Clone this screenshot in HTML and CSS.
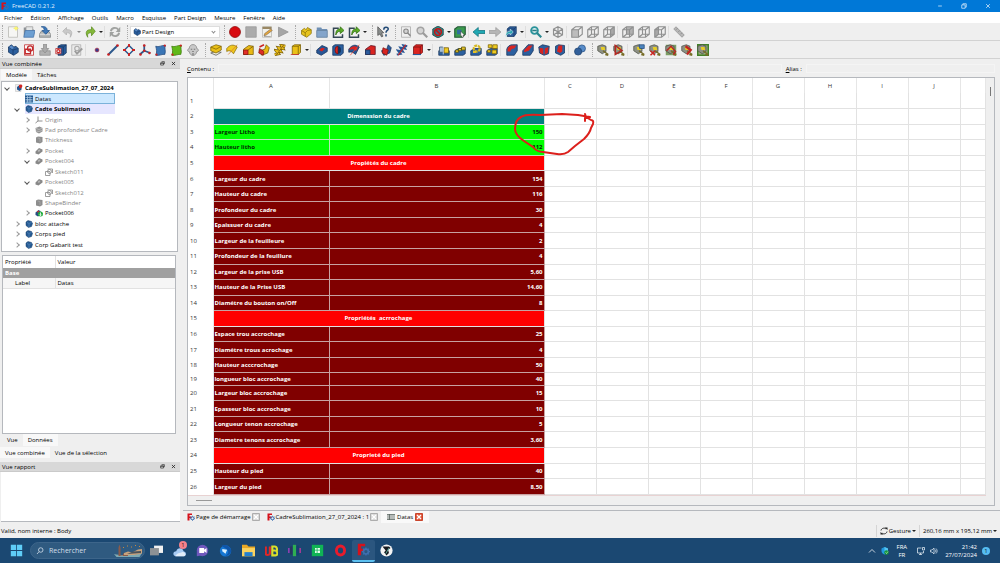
FILE: index.html
```html
<!DOCTYPE html>
<html lang="fr">
<head>
  <meta charset="UTF-8">
  <meta name="viewport" content="width=device-width, initial-scale=1.0">
  <title>FreeCAD 0.21.2</title>
  <link rel="stylesheet" href="styles.css">
</head>
<body>
  <svg class="sprite" aria-hidden="true">
    <!-- application -->
    <symbol id="freecad" viewBox="0 0 16 16"><path d="M1 1h9v3H5v3h4v3H5v5H1z" fill="#d5121c"/><circle cx="11" cy="10.500" r="3" fill="none" stroke="#3d6fb0" stroke-width="2"/><path d="M11 5.500v2M11 13.500v2M6 10.500h2M14 10.500h2M7.500 7l1.500 1.500M14.500 7l-1.500 1.500M7.500 14l1.500-1.500M14.500 14l-1.500-1.500" stroke="#3d6fb0" stroke-width="1.600"/></symbol>
    <symbol id="float" viewBox="0 0 16 16"><path d="M5 2h9v7h-3M2 6h9v7H2zM2 7h9" fill="none" stroke="#222" stroke-width="2"/></symbol>
    <symbol id="close" viewBox="0 0 16 16"><path d="M3 3l10 10M13 3L3 13" stroke="#222" stroke-width="2.600"/></symbol>
    <symbol id="close-tab" viewBox="0 0 16 16"><path d="M1 1h14v14H1z" fill="#d8d8d8" stroke="#adadad" stroke-width="2"/><path d="M4 4l8 8M12 4l-8 8" stroke="#fff" stroke-width="2.600"/></symbol>
    <symbol id="close-on" viewBox="0 0 16 16"><path d="M1 1h14v14H1z" fill="#e0563a" stroke="#c9442b" stroke-width="2"/><path d="M4 4l8 8M12 4l-8 8" stroke="#fff" stroke-width="2.600"/></symbol>
    <!-- file and macro -->
    <symbol id="new" viewBox="0 0 16 16"><path d="M2 1h12v14H2z" fill="#f6f6f4" stroke="#b5b5b0"/><path d="M12 0l1 2 3 1-3 1-1 3-1-3-3-1 3-1z" fill="#f5ee40"/><circle cx="12" cy="3" r="2" fill="#faf47a"/></symbol>
    <symbol id="open" viewBox="0 0 16 16"><path d="M1 2h6l1 2h6v9H1z" fill="#8d9296"/><path d="M4 1h9v6H4z" fill="#e4e6e6" stroke="#999"/><path d="M3 6h13l-2 9H1z" fill="#6d9fd2" stroke="#4673a8"/></symbol>
    <symbol id="save" viewBox="0 0 16 16"><path d="M3 7h10l2.500 4v4H.500v-4z" fill="#b4b7b7" stroke="#7c8080"/><path d="M1 11h14" stroke="#eee"/><path d="M3 1c5-1 8 1 8 5h3l-5 5-5-5h3c0-3-1-4-4-5z" fill="#3e78b8" stroke="#25558d"/></symbol>
    <symbol id="undo" viewBox="0 0 16 16"><path d="M6 2v3c7-1 9 4 5 10 1-5-1-6-5-6v3L1 7z" fill="#c9c9c9" stroke="#b2b2b2"/></symbol>
    <symbol id="redo" viewBox="0 0 16 16"><path d="M10 1v4C3 4 1 9 5 15 4 10 6 9 10 9v4l5-6z" fill="#84b83a" stroke="#5e8d21"/></symbol>
    <symbol id="refresh" viewBox="0 0 16 16"><path d="M2.500 7c1-5 7-6 10-2M13.500 9c-1 5-7 6-10 2" fill="none" stroke="#a0a2a0" stroke-width="2.600"/><path d="M15 1v7H9zM1 15V8h6z" fill="#a0a2a0"/></symbol>
    <symbol id="record" viewBox="0 0 16 16"><circle cx="8" cy="8" r="7.300" fill="#d80b10" stroke="#8e0505"/></symbol>
    <symbol id="stop" viewBox="0 0 16 16"><path d="M1 1h14v14H1z" fill="#ababab" stroke="#9a9a9a"/></symbol>
    <symbol id="macro" viewBox="0 0 16 16"><path d="M2 1h12v14H2z" fill="#f1f0ea" stroke="#b7b7b2"/><path d="M2 1h12v3H2z" fill="#9a8864"/><path d="M4 13l1-3 8-6 2 2-8 6z" fill="#e8a536" stroke="#8d7a5c"/><path d="M4 14h9" stroke="#999"/></symbol>
    <symbol id="play" viewBox="0 0 16 16"><path d="M2 1.500L15 8 2 14.500z" fill="#a6a6a6" stroke="#929292"/></symbol>
    <symbol id="part" viewBox="0 0 16 16"><path d="M2 6l4-3 2 2 2-3 5 3v5l-6 5-7-4z" fill="#e6c31c" stroke="#8a7208"/><path d="M2 6l5 3 3-3M7 9v5M10 6l5-1" fill="none" stroke="#8a7208"/></symbol>
    <symbol id="folder" viewBox="0 0 16 16"><path d="M1 2h6l1 2h7v11H1z" fill="#6f8fb3"/><path d="M1 6h14v9H1z" fill="#84a5cb" stroke="#66819f"/></symbol>
    <symbol id="link" viewBox="0 0 16 16"><path d="M9 3H2v12h12v-4" fill="none" stroke="#344654" stroke-width="2"/><path d="M5 12c0-6 2-8 6-8V1l5 5-5 4V7c-3 0-4 1-6 5z" fill="#59ab25" stroke="#2f6c0e"/></symbol>
    <symbol id="whats" viewBox="0 0 16 16"><path d="M1 1l8 8-3 .500 2 4-2 1-2-4-3 2z" fill="#888c8b" stroke="#555"/><path d="M9 5c0-5 6-4 6-1 0 2-3 2-3 5M12 11v3" fill="none" stroke="#244b76" stroke-width="2"/></symbol>
    <!-- view -->
    <symbol id="fit" viewBox="0 0 16 16"><path d="M2 1h12v14H2z" fill="#eee" stroke="#a6a6a6"/><circle cx="8" cy="7" r="3" fill="#d2d2d2" stroke="#888" stroke-width="1.500"/><path d="M10 9l4 4" stroke="#888" stroke-width="2"/></symbol>
    <symbol id="lens" viewBox="0 0 16 16"><circle cx="6" cy="6" r="4.500" fill="#d4d4d4" stroke="#a3a3a3" stroke-width="2"/><path d="M9 9l6 6" stroke="#9b9b9b" stroke-width="3"/></symbol>
    <symbol id="style" viewBox="0 0 16 16"><path d="M8 0l7 4v8l-7 4-7-4V4z" fill="#2d8b80" stroke="#193944"/><circle cx="8" cy="8" r="4.500" fill="#3f7089" stroke="#c31515" stroke-width="2"/><path d="M5 5l6 6" stroke="#c31515" stroke-width="2"/></symbol>
    <symbol id="bbox" viewBox="0 0 16 16"><path d="M1 4l4-3h10v10l-4 4H1z" fill="#3b9b4c" stroke="#245b38" stroke-width="1.500"/><path d="M4 5h6v6H4z" fill="#2f6d9d"/><path d="M9 7l5 5-2 .500 1 2-2 .500-1-2-1 1z" fill="#fff" stroke="#333" stroke-width=".7"/></symbol>
    <symbol id="left" viewBox="0 0 16 16"><path d="M0 8l7-6v4h9v4H7v4z" fill="#20a8b3" stroke="#13707b"/></symbol>
    <symbol id="right" viewBox="0 0 16 16"><path d="M16 8L9 2v4H0v4h9v4z" fill="#b6b6b6" stroke="#9d9d9d"/></symbol>
    <symbol id="golink" viewBox="0 0 16 16"><path d="M3 4l3-3h9v9l-3 4H3z" fill="#2d5e9b" stroke="#173965"/><path d="M3 4h9v10M12 4l3-3" fill="none" stroke="#173965"/><path d="M1 14c0-5 2-7 6-7V4l4 4-4 4v-2c-3 0-4 1-6 4z" fill="#2aa5b3" stroke="#e5f2f3" stroke-width=".7"/></symbol>
    <symbol id="zoom" viewBox="0 0 16 16"><circle cx="6" cy="6" r="4.500" fill="#e0f0f0" stroke="#2a929a" stroke-width="2.500"/><path d="M9 9l6 6" stroke="#2a8790" stroke-width="3"/><path d="M3 6h6" stroke="#267a84" stroke-width="2"/></symbol>
    <symbol id="iso" viewBox="0 0 16 16"><path d="M8 1l6 3v8l-6 3-6-3V4zM2 4l6 4 6-4M8 1v14M2 12l6-4 6 4" fill="none" stroke="#8f9090" stroke-width="1.500"/></symbol>
    <symbol id="cube" viewBox="0 0 16 16"><path d="M1 5l5-4h9v10l-5 4H1zM1 5h9v10M10 5l5-4M6 1v10h9M6 11l-5 4" fill="none" stroke="#8f9090" stroke-width="1.500"/></symbol>
    <symbol id="cube-f" viewBox="0 0 16 16"><path d="M1 5h9v10H1z" fill="#bcbcbc"/><path d="M1 5l5-4h9v10l-5 4H1zM1 5h9v10M10 5l5-4" fill="none" stroke="#8f9090" stroke-width="1.500"/></symbol>
    <symbol id="cube-r" viewBox="0 0 16 16"><path d="M10 5l5-4v10l-5 4z" fill="#a7a7a7"/><use href="#cube"/></symbol>
    <symbol id="cube-b" viewBox="0 0 16 16"><path d="M6 1h9v10H6z" fill="#b2b2b2"/><use href="#cube"/></symbol>
    <symbol id="cube-l" viewBox="0 0 16 16"><path d="M1 5l5-4v10l-5 4z" fill="#a7a7a7"/><use href="#cube"/></symbol>
    <symbol id="ruler" viewBox="0 0 16 16"><path d="M4 1l11 11-3 3L1 4z" fill="#b7b7b7" stroke="#929292"/><path d="M6 3L4 5M9 6L7 8M12 9l-2 2" stroke="#858585"/></symbol>
    <!-- part design helpers -->
    <symbol id="body" viewBox="0 0 16 16"><path d="M2 4l4-3 3 3 3-1 3 3v5l-6 4-7-4z" fill="#2c5f9e" stroke="#16365f"/><path d="M2 4l6 4 7-2M8 8v7" fill="none" stroke="#173a68"/><path d="M2.500 4L6 2l3 3-2 2z" fill="#5b8bc6"/></symbol>
    <symbol id="sketch" viewBox="0 0 16 16"><path d="M2 1h12v14H2z" fill="#fafafa" stroke="#c1282a"/><circle cx="9.500" cy="6" r="3.500" fill="none" stroke="#c1282a" stroke-width="1.700"/><path d="M3 7h7v6H3z" fill="none" stroke="#c1282a" stroke-width="1.700"/></symbol>
    <symbol id="import" viewBox="0 0 16 16"><path d="M1 9h14v6H1z" fill="#b1b1b1" stroke="#8d8d8d"/><path d="M6 0h4v6h3l-5 6-5-6h3z" fill="#aaa" stroke="#8c8c8c"/></symbol>
    <symbol id="map" viewBox="0 0 16 16"><path d="M4 3l4-2h7v11l-4 3H4z" fill="#285b9b" stroke="#15345c"/><path d="M11 4v11M4 3l7 1 4-3" fill="none" stroke="#15345c"/><path d="M1 6h7v7H1z" fill="#eee" stroke="#b22"/><circle cx="4.500" cy="9.500" r="2" fill="none" stroke="#c22" stroke-width="1.500"/></symbol>
    <symbol id="validate" viewBox="0 0 16 16"><path d="M1 1h12v14H1z" fill="#eaeaea" stroke="#aaa"/><circle cx="8" cy="6" r="3" fill="none" stroke="#aaa" stroke-width="1.500"/><path d="M5 9l3 4 7-7" fill="none" stroke="#9b9b9b" stroke-width="2.400"/></symbol>
    <symbol id="point" viewBox="0 0 16 16"><circle cx="8" cy="8" r="2.500" fill="#353b8c" stroke="#a32645"/></symbol>
    <symbol id="line" viewBox="0 0 16 16"><path d="M2 14L14 2" stroke="#2c588c" stroke-width="2.500"/><circle cx="2" cy="14" r="1.800" fill="#c22"/><circle cx="14" cy="2" r="1.800" fill="#c22"/></symbol>
    <symbol id="plane" viewBox="0 0 16 16"><path d="M8 2l6 6-6 6-6-6z" fill="#f4f4f4" stroke="#2c588c" stroke-width="2"/><path d="M8 0v4M8 12v4M0 8h4M12 8h4" stroke="#c22" stroke-width="2.500"/></symbol>
    <symbol id="axes" viewBox="0 0 16 16"><path d="M7 1v8l8 3M7 9l-6 5" fill="none" stroke="#2c588c" stroke-width="2.300"/><circle cx="7" cy="2" r="1.700" fill="#c22"/><circle cx="7" cy="9" r="1.700" fill="#c22"/><circle cx="2" cy="14" r="1.700" fill="#c22"/><circle cx="14" cy="12" r="1.700" fill="#c22"/></symbol>
    <symbol id="binder" viewBox="0 0 16 16"><path d="M1 3c4 2 8-2 13-1-2 4 1 7-1 12-3-1-7 2-12 1 2-4 1-8 0-12z" fill="#3b76b6" stroke="#214a7d"/><circle cx="13" cy="2" r="1.500" fill="#c22"/><circle cx="2" cy="14" r="1.500" fill="#c22"/></symbol>
    <symbol id="binder-g" viewBox="0 0 16 16"><path d="M1 3c4 2 8-2 13-1-2 4 1 7-1 12-3-1-7 2-12 1 2-4 1-8 0-12z" fill="#61b91a" stroke="#397906"/><circle cx="13" cy="2" r="1.500" fill="#c22"/><circle cx="2" cy="14" r="1.500" fill="#c22"/></symbol>
    <symbol id="clone" viewBox="0 0 16 16"><path d="M3 6c0-7 10-7 10 0 3 1 3 4 0 4-1 7-9 7-10 0-3 0-3-3 0-4z" fill="#c8c8c8" stroke="#858585"/><path d="M5 7h2M9 7h2M7 10h2M8 12v3" stroke="#777" stroke-width="1.500"/></symbol>
    <!-- additive -->
    <symbol id="pad" viewBox="0 0 16 16"><path d="M1 12l6-2 8 1-7 4z" fill="#f0f0e0" stroke="#555"/><path d="M1 4l7-3 7 2v5l-7 4-7-3z" fill="#e9bf16" stroke="#7d6304"/><path d="M1 4l7 3 7-4" fill="none" stroke="#7d6304"/></symbol>
    <symbol id="rev" viewBox="0 0 16 16"><path d="M1 6c4-5 9-6 14-2l-5 9C7 9 4 8 1 10z" fill="#efc71e" stroke="#8a6e05"/><path d="M3 14L15 1" stroke="#da7e28"/></symbol>
    <symbol id="loft" viewBox="0 0 16 16"><path d="M2 7l7-5 6 1v11H2z" fill="#e9b915" stroke="#755b04"/><path d="M2 8h6v6H2z" fill="#e3302a" stroke="#851411"/><path d="M8 8l7-5" stroke="#755b04"/></symbol>
    <symbol id="sweep" viewBox="0 0 16 16"><path d="M2 9l7-2 2-6 4 4-2 7-8 3z" fill="#e9b915" stroke="#755b04"/><path d="M2 6l6 4-1 5-6-3z" fill="#dd2d26" stroke="#861512"/><path d="M2 4l6-3" stroke="#c22" stroke-width="2"/></symbol>
    <symbol id="helix" viewBox="0 0 16 16"><path d="M1 14l5-1-3-4 6 1-3-5 6 1-2-4 5 1" fill="none" stroke="#826507" stroke-width="4"/><path d="M1 14l5-1-3-4 6 1-3-5 6 1-2-4 5 1" fill="none" stroke="#eac01b" stroke-width="2"/><path d="M3 15L13 1" stroke="#754d12"/></symbol>
    <symbol id="prim" viewBox="0 0 16 16"><path d="M3 3l3-2h8v10l-3 3H3z" fill="#eac017" stroke="#755c04"/><path d="M3 3h8v11M11 3l3-2" fill="none" stroke="#755c04"/><path d="M1 14h11" stroke="#c33"/></symbol>
    <!-- subtractive -->
    <symbol id="pocket" viewBox="0 0 16 16"><path d="M1 8l7-6 7 3v5l-8 5-6-3z" fill="#275796" stroke="#15335c"/><path d="M4 8l4-3 4 1-4 4z" fill="#d92320"/></symbol>
    <symbol id="hole" viewBox="0 0 16 16"><path d="M1 3l3-2h11v11l-3 3H1z" fill="#2b609f" stroke="#15335c"/><path d="M8 3a4 5 0 0 0 0 10z" fill="#d92320" stroke="#75100e"/><path d="M8 3a4 5 0 0 1 0 10z" fill="#15335c"/></symbol>
    <symbol id="groove" viewBox="0 0 16 16"><path d="M1 7c4-6 9-7 14-3l-5 10c-3-3-5-4-9-3z" fill="#275796" stroke="#15335c"/><path d="M2 6c4-4 8-4 11-1l-2 4c-3-2-6-3-9-1z" fill="#d92320"/><path d="M3 15L15 1" stroke="#e43"/></symbol>
    <symbol id="sloft" viewBox="0 0 16 16"><path d="M2 7l7-5 6 1v11H2z" fill="#d92420" stroke="#5a1020"/><path d="M2 8h6v6H2z" fill="#2b5b9c" stroke="#15335c"/></symbol>
    <symbol id="ssweep" viewBox="0 0 16 16"><path d="M2 9l7-2 2-6 4 4-2 7-8 3z" fill="#2b5b9c" stroke="#15335c"/><path d="M4 5l7 3-2 7-6-3z" fill="#d92420" stroke="#861512"/></symbol>
    <symbol id="shelix" viewBox="0 0 16 16"><path d="M1 14l5-1-3-4 6 1-3-5 6 1-2-4 5 1" fill="none" stroke="#275796" stroke-width="3"/><path d="M3 15L13 1" stroke="#d92420" stroke-width="1.500"/></symbol>
    <symbol id="sprim" viewBox="0 0 16 16"><path d="M2 4l3-3h9v10l-3 3H2z" fill="#dc2420" stroke="#721010"/><path d="M2 4h9v10M11 4l3-3" fill="none" stroke="#721010"/><path d="M1 14h11" stroke="#275796" stroke-width="1.500"/></symbol>
    <!-- patterns and dress-up -->
    <symbol id="mirror" viewBox="0 0 16 16"><path d="M1 9h14v6H1z" fill="#2b609f" stroke="#15335c"/><path d="M8 5h6v7H8z" fill="#efc923" stroke="#735a05"/><path d="M2 4h5v7H2z" fill="#a9c0d6" stroke="#36536f"/><path d="M7 1v13" stroke="#eee"/></symbol>
    <symbol id="linear" viewBox="0 0 16 16"><path d="M1 9l5-3h9v7l-3 2H1z" fill="#2b609f" stroke="#15335c"/><path d="M2 8h4v3H2zM6 6h4v3H6zM10 4h5v4h-5z" fill="#e4c127" stroke="#57520f"/></symbol>
    <symbol id="polar" viewBox="0 0 16 16"><path d="M1 9l5-3h9v7l-3 2H1z" fill="#2b609f" stroke="#15335c"/><circle cx="9" cy="6" r="4" fill="none" stroke="#d5b721" stroke-width="3" stroke-dasharray="4 1"/><path d="M4 9h4v3H4z" fill="#e4c127"/></symbol>
    <symbol id="multi" viewBox="0 0 16 16"><path d="M1 9l5-3h9v7l-3 2H1z" fill="#2b609f" stroke="#15335c"/><path d="M3 1h5v4H3zM9 1h6v5H9zM2 8h4v3H2zM8 8h6v5H8z" fill="#edca20" stroke="#796005"/></symbol>
    <symbol id="fillet" viewBox="0 0 16 16"><path d="M1 7c1-4 4-6 8-6h6v8l-4 6H1z" fill="#2b609f" stroke="#15335c"/><path d="M2 7c1-4 4-5 7-5h5l-3 4c-4 0-5 2-5 4H2z" fill="#da2521"/></symbol>
    <symbol id="chamfer" viewBox="0 0 16 16"><path d="M1 9l7-8h7v8l-4 6H1z" fill="#2b609f" stroke="#15335c"/><path d="M3 8l6-6h5l-5 7-6 2z" fill="#dc2622"/></symbol>
    <symbol id="draft" viewBox="0 0 16 16"><path d="M1 4l5-3 9 2-1 10-6 2-6-3z" fill="#2b609f" stroke="#15335c"/><path d="M2 5l5 1v8l-4-2zM9 6l5-2-1 8-4 2z" fill="#d62320"/></symbol>
    <symbol id="thick" viewBox="0 0 16 16"><path d="M2 3l4-2 8 1v10l-5 3-7-3z" fill="#2b609f" stroke="#15335c"/><path d="M6 2h5v8l-3 2-4-2z" fill="#d62320"/></symbol>
    <symbol id="bool" viewBox="0 0 16 16"><circle cx="10.500" cy="6" r="4.800" fill="#568bc8" stroke="#285184"/><circle cx="5.500" cy="10" r="4.800" fill="#315f9a" stroke="#1e416e"/></symbol>
    <!-- measure -->
    <symbol id="measure" viewBox="0 0 16 16"><path d="M1 3l6-2 5 2v7l-5 3-6-4z" fill="#8d9084" stroke="#4d5147"/><path d="M5 4h5l1 4H6z" fill="#e7cd25"/><path d="M8 9l7 5M11 14l4 1" stroke="#776c26" stroke-width="2"/></symbol>
    <symbol id="m-angle" viewBox="0 0 16 16"><use href="#measure"/><path d="M3 2v12l9-5z" fill="none" stroke="#b22823" stroke-width="2"/></symbol>
    <symbol id="m-ref" viewBox="0 0 16 16"><use href="#measure"/><path d="M8 1h7v5H9z" fill="#4c83bb" stroke="#254e7d"/></symbol>
    <symbol id="m-clear" viewBox="0 0 16 16"><use href="#measure"/><path d="M2 9l6 6M8 9l-6 6" stroke="#cb2420" stroke-width="2"/></symbol>
    <symbol id="m-all" viewBox="0 0 16 16"><path d="M1 1h14v14H1z" fill="#7d9d65"/><use href="#measure"/><path d="M2 9l6-6 6 7-3 4" fill="none" stroke="#b62724" stroke-width="2"/></symbol>
    <symbol id="m-3d" viewBox="0 0 16 16"><use href="#measure"/><path d="M6 3l7 5-5 6" fill="none" stroke="#c02521" stroke-width="3"/></symbol>
    <symbol id="m-delta" viewBox="0 0 16 16"><path d="M1 1h14v14H1z" fill="#98ac7c" stroke="#418028" stroke-width="2"/><use href="#measure"/></symbol>
    <!-- tree -->
    <symbol id="doc" viewBox="0 0 16 16"><path d="M1 1h11v14H1z" fill="#eee" stroke="#bbb"/><path d="M4 6l4-3 5 2v6l-4 3-5-3z" fill="#25558f"/><path d="M8 2l5-1 2 3-3 5-4-2z" fill="#d32421"/></symbol>
    <symbol id="grid" viewBox="0 0 16 16"><path d="M0 1h16v14H0z" fill="#24588f"/><path d="M1 5h14M1 9h14M1 12h14M5 2v13M10 2v13" stroke="#b9d6ee" stroke-width="1.300"/></symbol>
    <symbol id="t-body" viewBox="0 0 16 16"><path d="M2 4l4-3 7 2 2 4-2 6-6 2-5-4z" fill="#255a93" stroke="#1b416d"/><path d="M4 5l4 2 5-2M8 8v6" stroke="#6c9bc9" fill="none"/></symbol>
    <symbol id="t-axes" viewBox="0 0 16 16"><path d="M6 1v9h9M6 10l-5 4" fill="none" stroke="#858585" stroke-width="1.800"/></symbol>
    <symbol id="t-pad" viewBox="0 0 16 16"><path d="M1 4l8-3 6 3v7l-7 4-6-3z" fill="#929292"/><path d="M2 5l6 2 7-3M2 10l6 1 6-2" stroke="#ddd" fill="none"/></symbol>
    <symbol id="t-pocket" viewBox="0 0 16 16"><path d="M1 9l7-7 7 3v4l-8 6-6-2z" fill="#888"/><path d="M5 8l3-3 3 1-3 4z" fill="#b7b7b7"/></symbol>
    <symbol id="t-thick" viewBox="0 0 16 16"><path d="M2 3l4-2 9 1v10l-5 3-8-2z" fill="#8d8d8d"/><path d="M5 4l5 1v7" stroke="#bbb" fill="none"/></symbol>
    <symbol id="t-sketch" viewBox="0 0 16 16"><path d="M5 2h10v8M1 7h9v8H1z" fill="none" stroke="#858585" stroke-width="1.600"/><circle cx="9" cy="7" r="4" fill="none" stroke="#858585" stroke-width="1.600"/></symbol>
    <symbol id="t-tip" viewBox="0 0 16 16"><path d="M1 7l6-5 4 2v8l-5 3-5-3z" fill="#264f82"/><path d="M4 5l3-2 2 2-3 3z" fill="#c73030"/><circle cx="11" cy="10" r="5" fill="#20ac3c"/><path d="M11 7v6M8.500 11l2.500 2.500 2.500-2.500" fill="none" stroke="#fff" stroke-width="1.600"/></symbol>
    <!-- document tabs and status -->
    <symbol id="sheet" viewBox="0 0 16 16"><path d="M0 2h16v12H0z" fill="#f4f4f4"/><path d="M0 3h16M0 6h16M0 10h16M0 13h16M5 2v12" stroke="#59655f" stroke-width="1.600"/></symbol>
    <symbol id="gesture" viewBox="0 0 16 16"><path d="M2 7c1-5 7-6 10-3M14 9c-1 5-7 6-10 3" fill="none" stroke="#222" stroke-width="1.800"/><path d="M9 1h6v5zM7 15H1v-5z" fill="#222"/></symbol>
  </svg>

  <header class="titlebar">
    <svg class="icon"><use href="#freecad"/></svg>
    <span class="title">FreeCAD 0.21.2</span>
    <button class="win" aria-label="Réduire"><svg viewBox="0 0 16 16"><path d="M3 8h10"/></svg></button>
    <button class="win" aria-label="Restaurer"><svg viewBox="0 0 16 16"><path d="M2 5h9v9H2zM5 5V2h9v9h-3"/></svg></button>
    <button class="win" aria-label="Fermer"><svg viewBox="0 0 16 16"><path d="M3 3l10 10M13 3L3 13"/></svg></button>
  </header>

  <nav class="menubar">
    <button>Fichier</button><button>Édition</button><button>Affichage</button><button>Outils</button><button>Macro</button>
    <button>Esquisse</button><button>Part Design</button><button>Mesure</button><button>Fenêtre</button><button>Aide</button>
  </nav>

  <div class="toolbar top">
    <div class="group">
      <button class="tool" aria-label="Nouveau"><svg><use href="#new"/></svg></button>
      <button class="tool" aria-label="Ouvrir"><svg><use href="#open"/></svg></button>
      <button class="tool" aria-label="Enregistrer"><svg><use href="#save"/></svg></button>
    </div>
    <div class="group">
      <button class="tool" aria-label="Annuler"><svg><use href="#undo"/></svg></button>
      <button class="drop off" aria-label="Liste annuler"></button>
      <button class="tool" aria-label="Rétablir"><svg><use href="#redo"/></svg></button>
      <button class="drop" aria-label="Liste rétablir"></button>
      <i class="sep"></i>
      <button class="tool" aria-label="Rafraîchir"><svg><use href="#refresh"/></svg></button>
    </div>
    <div class="group">
      <label class="workbench">
        <svg class="icon"><use href="#body"/></svg>
        <select aria-label="Atelier"><option>Part Design</option></select>
      </label>
    </div>
    <div class="group">
      <button class="tool" aria-label="Enregistrer une macro"><svg><use href="#record"/></svg></button>
      <button class="tool" aria-label="Arrêter"><svg><use href="#stop"/></svg></button>
      <button class="tool" aria-label="Macros"><svg><use href="#macro"/></svg></button>
      <button class="tool" aria-label="Exécuter"><svg><use href="#play"/></svg></button>
    </div>
    <div class="group">
      <button class="tool" aria-label="Créer une pièce"><svg><use href="#part"/></svg></button>
      <button class="tool" aria-label="Créer un groupe"><svg><use href="#folder"/></svg></button>
      <button class="tool" aria-label="Créer un lien"><svg><use href="#link"/></svg></button>
      <button class="tool" aria-label="Créer un sous-lien"><svg><use href="#link"/></svg></button>
      <button class="drop" aria-label="Liste des liens"></button>
    </div>
    <div class="group">
      <button class="tool" aria-label="Qu'est-ce que c'est ?"><svg><use href="#whats"/></svg></button>
    </div>
    <div class="group">
      <button class="tool" aria-label="Tout afficher"><svg><use href="#fit"/></svg></button>
      <button class="tool" aria-label="Afficher la sélection"><svg><use href="#lens"/></svg></button>
      <button class="tool" aria-label="Style de représentation"><svg><use href="#style"/></svg></button>
      <button class="drop" aria-label="Liste des styles"></button>
      <button class="tool" aria-label="Boîte englobante"><svg><use href="#bbox"/></svg></button>
      <i class="sep"></i>
      <button class="tool" aria-label="Précédent"><svg><use href="#left"/></svg></button>
      <button class="tool" aria-label="Suivant"><svg><use href="#right"/></svg></button>
      <button class="tool" aria-label="Aller à l'objet lié"><svg><use href="#golink"/></svg></button>
      <button class="drop" aria-label="Liste de navigation"></button>
      <i class="sep"></i>
      <button class="tool" aria-label="Zoom"><svg><use href="#zoom"/></svg></button>
      <button class="drop" aria-label="Liste zoom"></button>
      <button class="tool" aria-label="Isométrique"><svg><use href="#iso"/></svg></button>
      <i class="sep"></i>
      <button class="tool" aria-label="Avant"><svg><use href="#cube-f"/></svg></button>
      <button class="tool" aria-label="Dessus"><svg><use href="#cube"/></svg></button>
      <button class="tool" aria-label="Droite"><svg><use href="#cube-r"/></svg></button>
      <i class="sep"></i>
      <button class="tool" aria-label="Arrière"><svg><use href="#cube-b"/></svg></button>
      <button class="tool" aria-label="Dessous"><svg><use href="#cube"/></svg></button>
      <button class="tool" aria-label="Gauche"><svg><use href="#cube-l"/></svg></button>
      <i class="sep"></i>
      <button class="tool" aria-label="Mesurer la distance"><svg><use href="#ruler"/></svg></button>
    </div>
  </div>

  <div class="toolbar bottom">
    <div class="group">
      <button class="tool" aria-label="Corps"><svg><use href="#body"/></svg></button>
      <button class="tool" aria-label="Esquisse"><svg><use href="#sketch"/></svg></button>
      <button class="tool" aria-label="Éditer l'esquisse"><svg><use href="#import"/></svg></button>
      <button class="tool" aria-label="Appliquer l'esquisse"><svg><use href="#map"/></svg></button>
      <button class="tool" aria-label="Valider l'esquisse"><svg><use href="#validate"/></svg></button>
      <i class="sep"></i>
      <button class="tool" aria-label="Point"><svg><use href="#point"/></svg></button>
      <button class="tool" aria-label="Ligne"><svg><use href="#line"/></svg></button>
      <button class="tool" aria-label="Plan"><svg><use href="#plane"/></svg></button>
      <button class="tool" aria-label="Repère"><svg><use href="#axes"/></svg></button>
      <button class="tool" aria-label="Forme liée"><svg><use href="#binder"/></svg></button>
      <button class="tool" aria-label="Sous-forme liée"><svg><use href="#binder-g"/></svg></button>
      <button class="tool" aria-label="Clone"><svg><use href="#clone"/></svg></button>
    </div>
    <div class="group">
      <button class="tool" aria-label="Protrusion"><svg><use href="#pad"/></svg></button>
      <button class="tool" aria-label="Révolution"><svg><use href="#rev"/></svg></button>
      <button class="tool" aria-label="Lissage"><svg><use href="#loft"/></svg></button>
      <button class="tool" aria-label="Balayage"><svg><use href="#sweep"/></svg></button>
      <button class="tool" aria-label="Hélice"><svg><use href="#helix"/></svg></button>
      <button class="tool" aria-label="Primitive additive"><svg><use href="#prim"/></svg></button>
      <button class="drop" aria-label="Primitives additives"></button>
      <i class="sep"></i>
      <button class="tool" aria-label="Cavité"><svg><use href="#pocket"/></svg></button>
      <button class="tool" aria-label="Perçage"><svg><use href="#hole"/></svg></button>
      <button class="tool" aria-label="Rainure"><svg><use href="#groove"/></svg></button>
      <button class="tool" aria-label="Enlèvement lissé"><svg><use href="#sloft"/></svg></button>
      <button class="tool" aria-label="Enlèvement balayé"><svg><use href="#ssweep"/></svg></button>
      <button class="tool" aria-label="Enlèvement hélicoïdal"><svg><use href="#shelix"/></svg></button>
      <button class="tool" aria-label="Primitive soustractive"><svg><use href="#sprim"/></svg></button>
      <button class="drop" aria-label="Primitives soustractives"></button>
      <i class="sep"></i>
      <button class="tool" aria-label="Symétrie"><svg><use href="#mirror"/></svg></button>
      <button class="tool" aria-label="Répétition linéaire"><svg><use href="#linear"/></svg></button>
      <button class="tool" aria-label="Répétition circulaire"><svg><use href="#polar"/></svg></button>
      <button class="tool" aria-label="Transformation multiple"><svg><use href="#multi"/></svg></button>
      <i class="sep"></i>
      <button class="tool" aria-label="Congé"><svg><use href="#fillet"/></svg></button>
      <button class="tool" aria-label="Chanfrein"><svg><use href="#chamfer"/></svg></button>
      <button class="tool" aria-label="Dépouille"><svg><use href="#draft"/></svg></button>
      <button class="tool" aria-label="Évidement"><svg><use href="#thick"/></svg></button>
      <i class="sep"></i>
      <button class="tool" aria-label="Opération booléenne"><svg><use href="#bool"/></svg></button>
    </div>
    <div class="group">
      <button class="tool" aria-label="Mesure linéaire"><svg><use href="#measure"/></svg></button>
      <button class="tool" aria-label="Mesure angulaire"><svg><use href="#m-angle"/></svg></button>
      <i class="sep"></i>
      <button class="tool" aria-label="Rafraîchir les mesures"><svg><use href="#m-ref"/></svg></button>
      <button class="tool" aria-label="Effacer les mesures"><svg><use href="#m-clear"/></svg></button>
      <button class="tool" aria-label="Tout basculer"><svg><use href="#m-all"/></svg></button>
      <button class="tool" aria-label="Basculer 3D"><svg><use href="#m-3d"/></svg></button>
      <button class="tool" aria-label="Basculer delta"><svg><use href="#m-delta"/></svg></button>
    </div>
  </div>

  <main class="workspace">
    <aside class="dock">
      <div class="dock-title">
        <span>Vue combinée</span>
        <button aria-label="Détacher"><svg><use href="#float"/></svg></button>
        <button aria-label="Fermer"><svg><use href="#close"/></svg></button>
      </div>
      <div class="tabs"><button class="active">Modèle</button><button>Tâches</button></div>
      <ul class="tree">
        <li class="l0 open bold"><svg class="icon"><use href="#doc"/></svg><span>CadreSublimation_27_07_2024</span></li>
        <li class="l1 leaf selected"><div><svg class="icon"><use href="#grid"/></svg><span>Datas</span></div></li>
        <li class="l1 open bold current"><div><svg class="icon"><use href="#t-body"/></svg><span>Cadte Sublimation</span></div></li>
        <li class="l2 shut dim"><svg class="icon"><use href="#t-axes"/></svg><span>Origin</span></li>
        <li class="l2 shut dim"><svg class="icon"><use href="#t-pad"/></svg><span>Pad profondeur Cadre</span></li>
        <li class="l2 leaf dim"><svg class="icon"><use href="#t-thick"/></svg><span>Thickness</span></li>
        <li class="l2 shut dim"><svg class="icon"><use href="#t-pocket"/></svg><span>Pocket</span></li>
        <li class="l2 open dim"><svg class="icon"><use href="#t-pocket"/></svg><span>Pocket004</span></li>
        <li class="l3 leaf dim"><svg class="icon"><use href="#t-sketch"/></svg><span>Sketch011</span></li>
        <li class="l2 open dim"><svg class="icon"><use href="#t-pocket"/></svg><span>Pocket005</span></li>
        <li class="l3 leaf dim"><svg class="icon"><use href="#t-sketch"/></svg><span>Sketch012</span></li>
        <li class="l2 leaf dim"><svg class="icon"><use href="#t-thick"/></svg><span>ShapeBinder</span></li>
        <li class="l2 shut"><svg class="icon"><use href="#t-tip"/></svg><span>Pocket006</span></li>
        <li class="l1 shut"><svg class="icon"><use href="#t-body"/></svg><span>bloc attache</span></li>
        <li class="l1 shut"><svg class="icon"><use href="#t-body"/></svg><span>Corps pied</span></li>
        <li class="l1 shut"><svg class="icon"><use href="#t-body"/></svg><span>Corp Gabarit test</span></li>
      </ul>
      <div class="props">
        <table>
          <thead><tr><th>Propriété</th><th>Valeur</th></tr></thead>
          <tbody>
            <tr class="section"><td colspan="2">Base</td></tr>
            <tr class="prop"><td>Label</td><td>Datas</td></tr>
          </tbody>
        </table>
      </div>
      <div class="tabs low"><button>Vue</button><button class="active">Données</button></div>
      <div class="tabs dock-tabs"><button class="active">Vue combinée</button><button>Vue de la sélection</button></div>
      <div class="dock-title">
        <span>Vue rapport</span>
        <button aria-label="Détacher"><svg><use href="#float"/></svg></button>
        <button aria-label="Fermer"><svg><use href="#close"/></svg></button>
      </div>
      <div class="report"></div>
    </aside>

    <section class="document">
      <div class="cell-bar">
        <label for="content"><u>C</u>ontenu :</label><input id="content" type="text">
        <label for="alias"><u>A</u>lias :</label><input id="alias" class="alias" type="text">
      </div>
      <div class="sheet">
        <div class="cells">
          <table>
            <colgroup><col class="c-num"><col class="c-a"><col class="c-b"><col span="8" class="c-std"><col></colgroup>
            <thead>
              <tr><th></th><th>A</th><th>B</th><th>C</th><th>D</th><th>E</th><th>F</th><th>G</th><th>H</th><th>I</th><th>J</th><th></th></tr>
            </thead>
            <tbody id="rows"></tbody>
          </table>
          <svg class="ink" viewBox="0 0 90 50"><path d="M77 5L65 3 49 2 27 3Q12 2 8 5 2 8 2 17q0 6 9 12l9 6q4 5 10 5l14 2q7 1 11-2l7-6 9-7q6-6 7-11l2-4Q81 8 78 8L73 5 72 2M72 4v5"/></svg>
        </div>
        <div class="vscroll"><i></i></div>
        <div class="hscroll"><i></i></div>
      </div>
      <div class="doc-tabs">
        <div class="doc-tab"><svg class="icon"><use href="#freecad"/></svg><a href="#">Page de démarrage</a><button aria-label="Fermer"><svg class="icon"><use href="#close-tab"/></svg></button></div>
        <div class="doc-tab"><svg class="icon"><use href="#freecad"/></svg><a href="#">CadreSublimation_27_07_2024 : 1</a><button aria-label="Fermer"><svg class="icon"><use href="#close-tab"/></svg></button></div>
        <div class="doc-tab active"><svg class="icon"><use href="#sheet"/></svg><a href="#">Datas</a><button aria-label="Fermer"><svg class="icon"><use href="#close-on"/></svg></button></div>
      </div>
    </section>
  </main>

  <footer class="status">
    <span class="message">Valid, nom interne : Body</span>
    <button><svg class="icon"><use href="#gesture"/></svg>Gesture<i class="caret"></i></button>
    <button>260,16 mm x 195,12 mm<i class="caret"></i></button>
  </footer>

  <div class="taskbar">
    <button class="app" aria-label="Démarrer"><svg viewBox="0 0 16 16"><path d="M1 1h6.500v6.500H1zM8.500 1H15v6.500H8.500zM1 8.500h6.500V15H1zM8.500 8.500H15V15H8.500z" fill="#5fcdf8"/></svg></button>
    <label class="search">
      <svg class="icon" viewBox="0 0 16 16"><circle cx="9.500" cy="6" r="4.500" fill="none" stroke="#dbe6f0" stroke-width="1.500"/><path d="M6 9.500L2 14" stroke="#dbe6f0" stroke-width="1.500"/></svg>
      <input type="text" placeholder="Rechercher">
      <svg class="skyline" viewBox="0 0 60 28"><path d="M2 20c12 3 35 3 56-2l-5 8H7z" fill="#7fa9b2"/><path d="M1 24h10V7l2-6 2 6v16h5v-4h10v5H1z" fill="#8c5b4a"/><path d="M22 18l8-3 8 2 12-6 8-1v9l-15 3H22z" fill="#c7a27d"/><path d="M28 20l12-5 16-1v4z" fill="#4b535b"/><path d="M20 7h2M28 4h2M36 6h2M44 3h2M52 5h2" stroke="#c9873e" stroke-width="2"/></svg>
    </label>
    <button class="app" aria-label="Vue des tâches"><svg viewBox="0 0 16 16"><path d="M5 2h11v9H5z" fill="#f1f1f1"/><path d="M0 5h11v9H0z" fill="#8e9295"/></svg></button>
    <button class="app weather" aria-label="Météo"><svg viewBox="0 0 16 16"><path d="M3 15c-4-1-3-6 1-6 1-5 8-5 9 0 4 1 4 6 0 6z" fill="#a7cbf4"/><path d="M3 15c1-4 6-4 8-5 4-1 6 5 2 5z" fill="#e2edf9"/></svg><b>1</b></button>
    <button class="app" aria-label="Discussion"><svg viewBox="0 0 16 16"><circle cx="8" cy="8" r="7" fill="#6f58bd"/><path d="M1 15V9l5 5z" fill="#6f58bd"/><path d="M4 5h6v2l3-2v6l-3-2v2H4z" fill="#fff"/></svg></button>
    <button class="app" aria-label="Courrier"><svg viewBox="0 0 16 16"><circle cx="8" cy="8.500" r="7" fill="#1677d3"/><path d="M3 2c4-2 11 0 12 6 0 5-5 7-8 7 5-3 6-6 2-9z" fill="#0f55a9"/><path d="M4 6l6 1-2 5-4-3z" fill="#d9efff"/></svg></button>
    <button class="app" aria-label="Explorateur"><svg viewBox="0 0 16 16"><path d="M0 1h6l2 2h8v12H0z" fill="#e9a825"/><path d="M0 5h16v10H0z" fill="#fad35f"/><path d="M3 10h10v5H3z" fill="#2480cf"/></svg></button>
    <button class="app" aria-label="UB"><svg viewBox="0 0 16 16"><path d="M1 3v9c0 2 4 2 5 0V3" fill="none" stroke="#e02727" stroke-width="2.600"/><path d="M9 3v11h4c3 0 3-5 0-5 3 0 2-6-1-6zM9 8h4" fill="none" stroke="#d9df2a" stroke-width="2.600"/></svg></button>
    <button class="app" aria-label="Audio"><svg viewBox="0 0 16 16"><path d="M1 5v6" stroke="#8c3fb0" stroke-width="2"/><path d="M4 3v10" stroke="#28345e" stroke-width="3"/><path d="M8 1v14" stroke="#2fae52" stroke-width="4"/><path d="M12 2v12" stroke="#173f72" stroke-width="3"/><path d="M15 5v6" stroke="#a03b94" stroke-width="2"/></svg></button>
    <button class="app" aria-label="Tableur"><svg viewBox="0 0 16 16"><path d="M1 1h14v14H1z" fill="#10b455"/><path d="M5 5h2v2H5zM8 5h3v2H8zM5 8h2v3H5zM8 8h3v3H8z" fill="#e9fff1"/></svg></button>
    <button class="app" aria-label="Opera"><svg viewBox="0 0 16 16"><ellipse cx="8" cy="8" rx="5" ry="5.500" fill="none" stroke="#e81c2c" stroke-width="3.600"/></svg></button>
    <button class="app running" aria-label="FreeCAD"><svg><use href="#freecad"/></svg></button>
    <button class="app" aria-label="Dessin"><svg viewBox="0 0 16 16"><circle cx="8" cy="8" r="7.500" fill="#f4f4f4"/><path d="M3 3h8l2 2-3 2 1 4-3 3-3-4 2-2z" fill="#161a20"/><path d="M7 12l4-7" stroke="#6bc5b2"/></svg></button>
    <div class="tray">
      <svg class="icon" viewBox="0 0 16 16"><path d="M2 11l6-6 6 6" fill="none" stroke="#fff" stroke-width="1.500"/></svg>
      <svg class="icon" viewBox="0 0 16 16"><path d="M7 0l7 3v5c0 4-4 6-7 7-3-1-6-3-6-7V3z" fill="#2099df"/><path d="M7 0l7 3v5H7z" fill="#53c4f0"/><circle cx="11" cy="11" r="4.500" fill="#17963a"/><path d="M9 11l2 2 3-4" fill="none" stroke="#fff"/></svg>
      <span class="lang">FRA<br>FR</span>
      <svg class="icon net" viewBox="0 0 16 16"><path d="M9 2H1v10h12V8M4 15h6M7 12v3M11 1h4v5h-4z" fill="none" stroke="#e7eff6" stroke-width="1.500"/></svg>
      <svg class="icon" viewBox="0 0 16 16"><path d="M1 6h3l4-4v12l-4-4H1zM10 5c2 2 2 4 0 6M12 3c3 3 3 7 0 10" fill="none" stroke="#e7eff6" stroke-width="1.400"/></svg>
      <span class="clock">21:42<br>27/07/2024</span>
      <b class="notif">1</b>
    </div>
  </div>

  <script>
    // kind, label, value (titles span A:B)
    const rows = [
      ['', '', ''],
      ['teal', 'Dimenssion du cadre'],
      ['green', 'Largeur Litho', '150'],
      ['green', 'Hauteur litho', '112'],
      ['red', 'Propiétés du cadre'],
      ['dark', 'Largeur du cadre', '154'],
      ['dark', 'Hauteur du cadre', '116'],
      ['dark', 'Profondeur du cadre', '30'],
      ['dark', 'Epaissuer du cadre', '4'],
      ['dark', 'Largeur de la feuilleure', '2'],
      ['dark', 'Profondeur de la feuillure', '4'],
      ['dark', 'Largeur de la prise USB', '5,60'],
      ['dark', 'Hauteur de la Prise USB', '14,60'],
      ['dark', 'Diamétre du bouton on/Off', '8'],
      ['red', 'Propriétés \u00a0acrrochage'],
      ['dark', 'Espace trou accrochage', '25'],
      ['dark', 'Diamétre trous acrochage', '4'],
      ['dark', 'Hauteur acccrochage', '50'],
      ['dark short', 'longueur bloc accrochage', '40'],
      ['dark', 'Largeur bloc accrochage', '15'],
      ['dark', 'Epasseur bloc accrochage', '10'],
      ['dark', 'Longueur tenon accrochage', '5'],
      ['dark', 'Diametre tenons accrochage', '3,60'],
      ['red', 'Proprieté du pied'],
      ['dark', 'Hauteur du pied', '40'],
      ['dark', 'Largeur du pied', '8,50']
    ];

    document.getElementById('rows').innerHTML = rows.map(([kind, label, value], i) => `
      <tr class="${kind}">
        <th>${i + 1}</th>
        ${value === undefined ? `<td class="fill head" colspan="2">${label}</td>` : `<td class="fill">${label}</td><td class="fill num">${value}</td>`}
        ${'<td></td>'.repeat(9)}
      </tr>
    `).join('');
  </script>
</body>
</html>
```
FILE: styles.css
```css
*, ::before, ::after { box-sizing: border-box; }
body { margin: 0; height: 100vh; display: flex; flex-direction: column; overflow: hidden; background: #efefef; color: #000; font: 6px/8px "Open Sans", "Noto Sans", sans-serif; }
button, input, select { margin: 0; padding: 0; border: 0; background: none; color: inherit; font: inherit; }
svg { display: block; }
a { color: inherit; text-decoration: none; }
.sprite { position: absolute; width: 0; height: 0; }
.icon { width: 8px; height: 8px; flex: none; }

/* title and menus */
.titlebar { height: 12px; flex: none; display: flex; align-items: center; background: #0078d7; color: #e6f3fd; }
.titlebar .title { flex: 1; margin-left: 3px; }
.titlebar .icon { margin-left: 1px; }
.win { width: 24px; height: 12px; display: flex; align-items: center; justify-content: center; }
.win svg { width: 6px; height: 6px; fill: none; stroke: #d9ecfb; stroke-width: 2; }
.menubar { height: 11px; flex: none; display: flex; align-items: center; gap: 8px; padding: 0 4px; background: #fff; }

/* toolbars */
.toolbar { height: 18px; flex: none; display: flex; border-bottom: 1px solid #d2d2d2; }
.group { display: flex; align-items: center; padding-right: 2px; }
.group::before { content: ""; width: 1px; height: 14px; margin: 0 2px; border-left: 1px dotted #aaa; }
.tool { width: 16px; height: 16px; display: flex; align-items: center; justify-content: center; }
.tool svg { width: 12px; height: 12px; }
.drop { width: 6px; height: 16px; display: flex; align-items: center; justify-content: center; }
.drop::before, .caret { content: ""; border: 2px solid transparent; border-top-color: #222; border-bottom: 0; }
.drop.off::before { border-top-color: #888; }
.sep { width: 4px; height: 12px; border-left: 1px solid #dedede; }
.top .sep { width: 3px; }
.workbench { width: 90px; height: 12px; display: flex; align-items: center; gap: 1px; padding: 0 4px 0 2px; background: #fff; border: 1px solid #ddd; }
.workbench select { flex: 1; appearance: none; outline: 0; }
.workbench::after { content: ""; width: 3px; height: 3px; border: solid #888; border-width: 0 1px 1px 0; transform: rotate(45deg); }

/* left dock */
.workspace { flex: 1; min-height: 0; display: flex; }
.dock { width: 180px; flex: none; display: flex; flex-direction: column; }
.dock-title { height: 10px; flex: none; display: flex; align-items: center; gap: 6px; padding: 0 4px 0 2px; background: #d8d8d8; border-bottom: 1px solid #cacaca; }
.dock-title span { flex: 1; }
.dock-title svg { width: 5px; height: 5px; }
.tabs { height: 12px; flex: none; display: flex; padding: 0 1px 1px; }
.tabs button { padding: 0 5px; }
.tabs .active { background: #f8f8f8; }
.tabs.low { margin: 0 2px; padding: 0; }
.dock-tabs { height: 16px; padding: 1px 0 4px; }
.tree { flex: 17; min-height: 0; margin: 0 2px 3px 1px; padding: 1px 0; display: flex; flex-direction: column; list-style: none; background: #fff; border: 1px solid #b5b8bd; }
.tree li { flex: 1; min-height: 0; display: flex; align-items: center; gap: 2px; padding-left: 3px; white-space: nowrap; }
.tree li::before { content: ""; width: 4px; height: 4px; flex: none; margin-right: 4px; border: solid #555; border-width: 0 1px 1px 0; }
.tree .open::before { transform: rotate(45deg); }
.tree .shut::before { transform: rotate(-45deg); border-color: #999; }
.tree .leaf::before { border: 0; }
.tree .l1 { padding-left: 13px; }
.tree .l2 { padding-left: 23px; }
.tree .l3 { padding-left: 33px; }
.tree li div { width: 90px; align-self: stretch; display: flex; align-items: center; gap: 2px; }
.tree .selected div { background: #cce8ff; box-shadow: inset 0 0 0 1px #7bb2da; }
.tree .current div { background: #e6e6ff; }
.bold { font-weight: 700; }
.dim { color: #858585; }
.props { flex: 18; min-height: 0; margin: 0 4px 0 2px; background: #fff; border: 1px solid #b5b8bd; }
.props table { width: 100%; table-layout: fixed; border-collapse: collapse; }
.props th, .props td { height: 10px; padding: 0 2px; text-align: left; font-weight: 400; }
.props th { height: 12px; }
.props th:first-child { width: 52px; border-right: 1px solid #e2e2e2; }
.props .section td { background: #a0a0a0; color: #fff; font-weight: 700; }
.props .prop td { background: #f6f6f6; border-bottom: 1px solid #e2e2e2; }
.props .prop td:first-child { padding-left: 12px; border-right: 1px solid #e2e2e2; }
.report { height: 50px; flex: none; margin: 0 0 1px 1px; background: #fff; border-bottom: 1px solid #b5b8bd; }

/* spreadsheet */
.document { flex: 1; min-width: 0; display: flex; flex-direction: column; padding-left: 7px; }
.cell-bar { height: 18px; flex: none; display: flex; align-items: center; gap: 4px; padding: 3px 5px 2px 0; }
.cell-bar input { flex: 3; min-width: 0; height: 9px; border: 1px solid #f4f4f4; }
.cell-bar .alias { flex: 1; }
.sheet { flex: 1; min-height: 0; margin-right: 5px; display: grid; grid-template: 1fr 9px / 1fr 8px; border: 1px solid #b5b8bd; }
.cells { position: relative; min-height: 0; overflow: hidden; background: #fff; border-bottom: 1px solid #e8d2d2; }
.cells table { width: 100%; height: 100%; table-layout: fixed; border-collapse: collapse; }
.c-num { width: 25px; }
.c-a { width: 116px; }
.c-b { width: 215px; }
.c-std { width: 52px; }
.cells tr { height: 15px; }
.cells .short { height: 12px; }
.cells th { padding: 0 2px; font-weight: 400; color: #333; }
.cells thead th { border-right: 1px solid #e6e6e6; }
.cells tbody th { text-align: left; border-right: 1px solid #e6e6e6; }
.cells td { padding: 0 1px; border: 1px solid #e2e2e2; border-top: 0; font-weight: 700; white-space: nowrap; }
.cells .head { text-align: center; }
.cells .num { text-align: right; }
.teal .fill { background: #008080; color: #fff; }
.red .fill { background: #f00; color: #fff; }
.green .fill { background: #0f0; color: #022a02; border-color: #b5e8b5; }
.dark .fill { background: #800000; color: #fff; border-color: #c8a2a2; }
.ink { position: absolute; left: 325px; top: 34px; width: 90px; height: 50px; fill: none; stroke: #dc201c; stroke-width: 2; stroke-linecap: round; stroke-linejoin: round; }
.vscroll { display: flex; justify-content: center; padding-top: 9px; }
.vscroll i { width: 1px; height: 9px; background: #777; }
.hscroll { display: flex; align-items: center; padding-left: 8px; }
.hscroll i { width: 16px; height: 1px; background: #999; }
.doc-tabs { height: 13px; flex: none; display: flex; gap: 1px; margin: 4px 0 0 -4px; border-top: 1px solid #b5b8bd; }
.doc-tab { display: flex; align-items: center; gap: 1px; padding: 0 2px 0 4px; }
.doc-tab.active { gap: 2px; padding: 0 6px; background: #f9f9f9; }

/* status bar */
.status { height: 15px; flex: none; display: flex; align-items: center; padding-right: 3px; }
.message { flex: 1; padding-left: 1px; }
.status button { height: 12px; display: flex; align-items: center; gap: 1px; padding: 0 3px; border-left: 1px solid #d5d5d5; }
.status button:last-child { padding-right: 0; }

/* windows taskbar */
.taskbar { height: 25px; flex: none; display: flex; align-items: center; padding: 0 10px 0 5px; background: #1b4872; color: #fff; }
.app { width: 23px; height: 22px; flex: none; display: flex; align-items: center; justify-content: center; }
.app svg { width: 13px; height: 13px; }
.search { width: 115px; height: 17px; margin: 0 0 0 2px; padding: 0 1px 0 5px; display: flex; align-items: center; gap: 5px; border-radius: 9px; background: #2f5a80; border: 1px solid #3d658a; }
.search input { flex: 1; min-width: 0; font-size: 7px; }
.search input::placeholder { color: #d3dfe9; opacity: 1; }
.skyline { width: 30px; height: 14px; flex: none; }
.weather { position: relative; }
.weather b, .notif { width: 8px; height: 8px; border-radius: 4px; background: #f3818b; color: #3d1418; font-weight: 400; text-align: center; }
.weather b { position: absolute; right: 4px; top: 1px; }
.running { background: #2b567f; border-bottom: 2px solid #5cc0f0; border-radius: 2px; }
.tray { margin-left: auto; display: flex; align-items: center; gap: 5px; }
.lang { margin: 0 3px; text-align: center; }
.net { margin-left: 2px; }
.clock { margin-left: 2px; text-align: right; }
.notif { background: #55bdf2; color: #123; }
```
